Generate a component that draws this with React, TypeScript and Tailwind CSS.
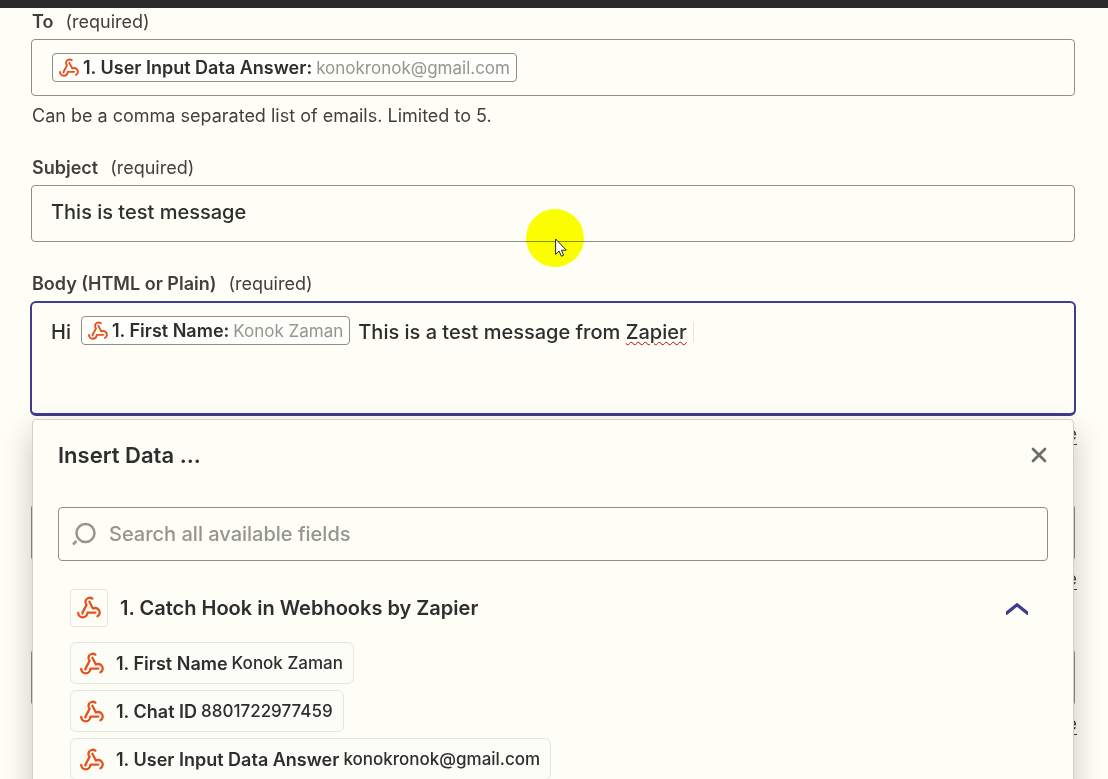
import type { ReactNode } from 'react';

const options = [
  { name: '1. First Name', value: 'Konok Zaman' },
  { name: '1. Chat ID', value: '8801722977459' },
  { name: '1. User Input Data Answer', value: 'konokronok@gmail.com' },
];

function HookIcon({ className }: { className: string }) {
  return (
    <svg
      viewBox="0 0 24 24"
      fill="none"
      stroke="#e4531f"
      strokeWidth="2.3"
      strokeLinecap="round"
      strokeLinejoin="round"
      className={className}
      aria-hidden="true"
    >
      <path d="M15.4 2.600c-2.200-1.600-6.300-.8-6.900 2.600-.2 1.500.3 2.700 1.100 3.700L6 15.600c-.3.6-.5 1.200-.6 1.900" />
      <path d="M12.400 5.800l3.500 6.700c1.700-.8 3.700-.6 5.200.6 2.400 2 2.100 5.700-.7 7.100" />
      <path d="M18.200 16.600h-7.700c-.2 2.700-2.200 4.700-4.800 4.700-2.600 0-4.500-1.900-4.500-4.500" />
    </svg>
  );
}

// Mapped value shown inside a text box
function Pill({ name, value }: { name: string; value: string }) {
  return (
    <span
      contentEditable={false}
      className="inline-flex h-[29px] items-center rounded border border-[#8f8f88] bg-[#fefefa] px-1.5 text-lg leading-6 whitespace-nowrap"
    >
      <HookIcon className="mr-1 h-5 w-5" />
      <span className="font-semibold text-[#2d2e2e]">{name}:</span>
      <span className="ml-1 text-[17px] text-[#95958f]">{value}</span>
    </span>
  );
}

function Label({ id, htmlFor, children }: { id?: string; htmlFor?: string; children: ReactNode }) {
  return (
    <label id={id} htmlFor={htmlFor} className="mb-[5px] flex gap-3 pl-px text-lg leading-6 text-[#403f3e]">
      <span className="font-semibold">{children}</span>
      <span>(required)</span>
    </label>
  );
}

// Optional field further down the form
function PlainField({ label }: { label: string }) {
  return (
    <div className="mt-[58px]">
      <input aria-label={label} className="block h-[57px] w-full rounded border border-[#8f8f88] px-5 text-xl" />
      <MoreLink />
    </div>
  );
}

function MoreLink() {
  return (
    <div className="-mr-0.5 mt-1.5 flex justify-end">
      <a href="#more" className="text-lg leading-6 text-[#403f3e] underline underline-offset-4">
        more
      </a>
    </div>
  );
}

function Pointer() {
  return (
    <>
      <div className="pointer-events-none absolute left-[495px] top-6 h-[58px] w-[58px] rounded-full bg-[#fbff00] mix-blend-multiply" />
      <svg viewBox="0 0 12 19" className="pointer-events-none absolute left-[524px] top-[53px] h-[19px] w-3" aria-hidden="true">
        <path d="M.6 1v15.400l3.500-3.300 2.300 5.100 2.200-1-2.200-5h4.900z" fill="#fff" stroke="#222" strokeWidth="1" />
      </svg>
    </>
  );
}

function InsertData() {
  return (
    <section className="absolute inset-x-px top-full z-10 mt-[3px] rounded border border-[#d0d1ca] bg-[#fefef6] px-[25px] pb-10 pt-[19px] shadow-[0_12px_30px_rgba(0,0,0,0.22)]">
      <header className="flex items-center justify-between">
        <h2 className="text-[22px] leading-8 font-semibold text-[#2d2e2e]">Insert Data ...</h2>
        <button type="button" aria-label="Close" className="p-px">
          <svg viewBox="0 0 16 16" className="h-4 w-4" stroke="#6d6d68" strokeWidth="2.700" strokeLinecap="round">
            <path d="M2 2l12 12M14 2L2 14" />
          </svg>
        </button>
      </header>

      <div className="mt-9 flex h-[54px] items-center rounded border border-[#8f8f88] px-3">
        <svg viewBox="0 0 26 26" className="h-[26px] w-[26px]" fill="none" stroke="#95958f" strokeWidth="2.500" aria-hidden="true">
          <circle cx="14.500" cy="12" r="9" />
          <path d="M5.500 20L2 23.500" />
        </svg>
        <input
          type="search"
          aria-label="Search all available fields"
          placeholder="Search all available fields"
          className="ml-3 flex-1 bg-transparent text-xl font-medium outline-none placeholder:text-[#95958f]"
        />
      </div>

      <div className="mt-7 px-3">
        <button type="button" className="flex w-full items-center pr-2">
          <span className="flex h-[38px] w-[38px] items-center justify-center rounded-sm border border-[#e6e6e0]">
            <HookIcon className="h-6 w-6" />
          </span>
          <span className="ml-3 text-xl font-semibold text-[#2d2e2e]">1. Catch Hook in Webhooks by Zapier</span>
          <svg viewBox="0 0 22 13" className="ml-auto h-[13px] w-[22px]" fill="none" stroke="#403b8a" strokeWidth="3.200" aria-hidden="true">
            <path d="M-1 12.500L11 2.700l12 9.800" />
          </svg>
        </button>

        <ul className="mt-[15px] flex flex-col items-start gap-1.5">
          {options.map((option) => (
            <li key={option.name}>
              <button
                type="button"
                className="flex h-[42px] items-center rounded-md border border-[#e6e6e0] bg-[#fdfdf8] pl-[9px] pr-2.5 pt-px text-lg text-[#2d2e2e]"
              >
                <HookIcon className="mr-3 h-6 w-6" />
                <span className="font-semibold">{option.name}</span>
                <span className="ml-1 text-[17px] font-medium">{option.value}</span>
              </button>
            </li>
          ))}
        </ul>
      </div>
    </section>
  );
}

export default function App() {
  return (
    <div className="h-screen overflow-hidden bg-[#fefef6] font-['Inter',sans-serif] text-[#2d2e2e]">
      <div className="h-2 bg-[#2b2b2b]" />
      <form className="pl-[31px] pr-[33px] pt-0.5">
        <div>
          <Label id="to-label">To</Label>
          <div
            role="textbox"
            aria-labelledby="to-label"
            contentEditable
            suppressContentEditableWarning
            className="flex h-[57px] items-center rounded border border-[#8f8f88] px-5 outline-none"
          >
            <Pill name="1. User Input Data Answer" value="konokronok@gmail.com" />
          </div>
          <p className="mt-2 pl-px text-lg leading-6 text-[#403f3e]">Can be a comma separated list of emails. Limited to 5.</p>
        </div>

        <div className="mt-7">
          <Label htmlFor="subject">Subject</Label>
          <div className="relative">
            <input
              id="subject"
              defaultValue="This is test message"
              className="block h-[57px] w-full rounded border border-[#8f8f88] px-[19px] pb-1 text-xl font-medium outline-none"
            />
            <Pointer />
          </div>
        </div>

        <div className="mt-[30px]">
          <Label id="body-label">Body (HTML or Plain)</Label>
          <div className="relative">
            <div
              role="textbox"
              aria-labelledby="body-label"
              contentEditable
              suppressContentEditableWarning
              className="-mx-px flex h-[115px] items-start rounded-md border-2 border-b-3 border-[#403b8a] px-[19px] pt-[13px] text-xl leading-8 font-medium outline-none"
            >
              <span className="mr-2.5">Hi</span>
              <span className="font-normal">
                <Pill name="1. First Name" value="Konok Zaman" />
              </span>
              <span className="ml-2">
                This is a test message from{' '}
                <span className="underline decoration-[#c00020] decoration-wavy decoration-1 underline-offset-2">Zapier</span>
              </span>
              <span className="ml-1.5 mt-1.5 h-5 w-px bg-[#f6e0cc]" />
            </div>
            <InsertData />
          </div>
          <MoreLink />
        </div>

        <PlainField label="From Name" />
        <PlainField label="Reply To" />
      </form>
    </div>
  );
}
